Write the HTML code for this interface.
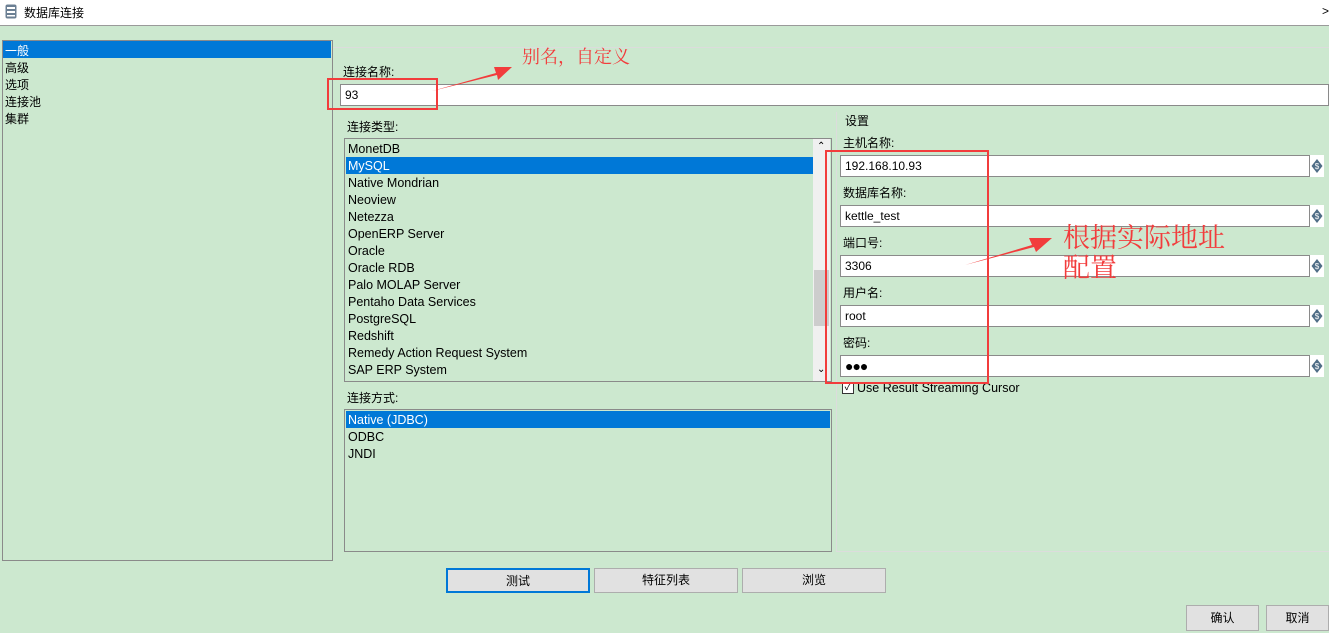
<!DOCTYPE html>
<html><head><meta charset="utf-8"><style>
*{box-sizing:border-box;margin:0;padding:0}
body{width:1329px;height:633px;overflow:hidden;background:#cce8cf;font-family:"Liberation Sans","Noto Sans CJK SC",sans-serif;font-size:12px;color:#000;position:relative}
.a{position:absolute;white-space:nowrap}
.box{position:absolute;border:1px solid #8a8a8a}
.inp{position:absolute;background:#fff;border:1px solid #8a8a8a;padding-left:4px;line-height:20px;font-size:12px}
.sel{position:absolute;background:#0078d7;color:#fff}
.btn{position:absolute;background:#e1e1e1;border:1px solid #adadad;text-align:center;line-height:22px}
.red{position:absolute;border:2px solid #f23c3c}
</style></head><body>
<div class="a" style="left:0;top:0;width:1329px;height:26px;background:#fff;border-bottom:1px solid #9a9a9a"></div>
<svg class="a" style="left:5px;top:4px" width="12" height="15" viewBox="0 0 12 15"><rect x="0.5" y="0.5" width="11" height="14" rx="2" fill="#6b7f93"/><rect x="2" y="3" width="8" height="2" fill="#fff"/><rect x="2" y="7" width="8" height="2" fill="#fff"/><rect x="2" y="11" width="8" height="1.5" fill="#fff"/></svg>
<div class="a" style="left:24px;top:4px;font-size:12px">数据库连接</div>
<div class="a" style="left:1322px;top:4px;font-size:12px">&gt;</div>

<div class="box" style="left:2px;top:40px;width:331px;height:521px"></div>
<div class="sel" style="left:3px;top:41px;width:328px;height:17px"></div>
<div class="a" style="left:5px;top:42px;color:#fff">一般</div>
<div class="a" style="left:5px;top:59px">高级</div>
<div class="a" style="left:5px;top:76px">选项</div>
<div class="a" style="left:5px;top:93px">连接池</div>
<div class="a" style="left:5px;top:110px">集群</div>

<div class="a" style="left:333px;top:47px;width:996px;height:1px;background:#dcdcdc"></div>
<div class="a" style="left:343px;top:63px">连接名称:</div>
<div class="inp" style="left:340px;top:84px;width:989px;height:22px">93</div>
<div class="red" style="left:327px;top:78px;width:111px;height:32px"></div>

<div class="a" style="left:347px;top:118px">连接类型:</div>
<div class="box" style="left:344px;top:138px;width:488px;height:244px"></div>
<div class="sel" style="left:346px;top:157px;width:467px;height:17px"></div>
<div class="a" style="left:813px;top:139px;width:17px;height:242px;background:#f0f0f0"></div>
<div class="a" style="left:814px;top:270px;width:15px;height:56px;background:#cdcdcd"></div>
<div class="a" style="left:817px;top:141px;font-size:10px">&#8963;</div>
<div class="a" style="left:817px;top:364px;font-size:10px">&#8964;</div>
<div class="a" style="left:348px;top:141px;line-height:17px;font-size:12.5px">MonetDB<br><span style="color:#fff">MySQL</span><br>Native Mondrian<br>Neoview<br>Netezza<br>OpenERP Server<br>Oracle<br>Oracle RDB<br>Palo MOLAP Server<br>Pentaho Data Services<br>PostgreSQL<br>Redshift<br>Remedy Action Request System<br>SAP ERP System</div>

<div class="a" style="left:347px;top:389px">连接方式:</div>
<div class="box" style="left:344px;top:409px;width:488px;height:143px"></div>
<div class="sel" style="left:346px;top:411px;width:484px;height:17px"></div>
<div class="a" style="left:348px;top:412px;line-height:17px;font-size:12.5px"><span style="color:#fff">Native (JDBC)</span><br>ODBC<br>JNDI</div>

<div class="a" style="left:836px;top:112px;width:493px;height:440px;border-left:1px solid #dcdcdc;border-bottom:1px solid #dcdcdc"></div>
<div class="a" style="left:845px;top:112px">设置</div>
<div class="a" style="left:843px;top:134px">主机名称:</div>
<div class="inp" style="left:840px;top:155px;width:470px;height:22px">192.168.10.93</div>
<div class="a" style="left:843px;top:184px">数据库名称:</div>
<div class="inp" style="left:840px;top:205px;width:470px;height:22px">kettle_test</div>
<div class="a" style="left:843px;top:234px">端口号:</div>
<div class="inp" style="left:840px;top:255px;width:470px;height:22px">3306</div>
<div class="a" style="left:843px;top:284px">用户名:</div>
<div class="inp" style="left:840px;top:305px;width:470px;height:22px">root</div>
<div class="a" style="left:843px;top:334px">密码:</div>
<div class="inp" style="left:840px;top:355px;width:470px;height:22px;font-size:14px;letter-spacing:-1px">●●●</div>
<svg width="0" height="0" style="position:absolute"><defs><g id="d"><rect x="0" y="0" width="14" height="22" fill="#fff"/><path d="M7 4 L12.5 11 L7 18 L1.5 11Z" fill="#4f6d86"/><text x="7" y="14" font-size="8" fill="#fff" text-anchor="middle" font-family="Liberation Sans">$</text></g></defs></svg>
<svg class="a" style="left:1310px;top:155px" width="14" height="222"><use href="#d"/><use href="#d" y="50"/><use href="#d" y="100"/><use href="#d" y="150"/><use href="#d" y="200"/></svg>
<div class="a" style="left:842px;top:382px;width:12px;height:12px;border:1px solid #333;background:#fff;font-size:10px;line-height:10px;text-align:center">✓</div>
<div class="a" style="left:857px;top:381px;font-size:12.5px">Use Result Streaming Cursor</div>
<div class="red" style="left:825px;top:150px;width:164px;height:234px"></div>

<svg class="a" style="left:0;top:0" width="1329" height="633">
<path d="M432 91 L496 73 L494 67 L512 67 L498 80 L497 75 Z" fill="#f23c3c"/>
<path d="M965 265 L1032 245 L1029 238 L1052 238 L1036 252 L1034 247 Z" fill="#f23c3c"/>
</svg>
<div class="a" style="left:522px;top:43px;color:#f23c3c;font-size:18px;font-family:'Noto Serif CJK SC',serif">别名，自定义</div>
<div class="a" style="left:1063px;top:221px;color:#f23c3c;font-size:27px;line-height:30px;font-family:'Noto Serif CJK SC',serif">根据实际地址<br>配置</div>

<div class="btn" style="left:446px;top:568px;width:144px;height:25px;border:2px solid #0078d7">测试</div>
<div class="btn" style="left:594px;top:568px;width:144px;height:25px">特征列表</div>
<div class="btn" style="left:742px;top:568px;width:144px;height:25px">浏览</div>
<div class="btn" style="left:1186px;top:605px;width:73px;height:26px;line-height:24px">确认</div>
<div class="btn" style="left:1266px;top:605px;width:63px;height:26px;line-height:24px">取消</div>
</body></html>
